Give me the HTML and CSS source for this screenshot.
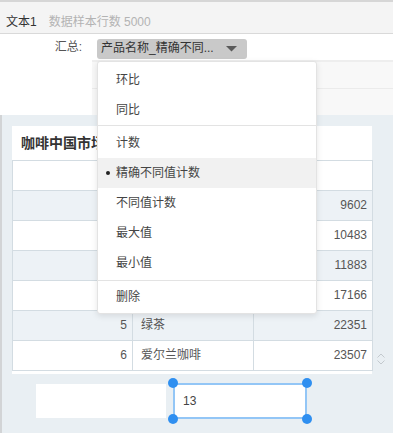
FILE: index.html
```html
<!DOCTYPE html>
<html lang="zh">
<head>
<meta charset="utf-8">
<title>文本1</title>
<link rel="stylesheet" href="styles.css">
</head>
<body>
<div class="page">
  <header class="topbar">
    <span class="title">文本1</span>
    <span class="meta">数据样本行数 5000</span>
  </header>

  <section class="settings">
    <div class="field">
      <span class="field-label">汇总:</span>
      <div class="select">
        <span class="select-text">产品名称_精确不同...</span>
        <svg class="caret" width="11" height="6" viewBox="0 0 11 6"><path d="M0 0H11L5.5 5.5Z" fill="#5a5a5a"/></svg>
      </div>
    </div>
    <div class="sub-rows">
      <div class="sub-row"></div>
      <div class="sub-row"></div>
    </div>
  </section>

  <main class="canvas">
    <div class="card-row">
      <div class="card">
        <div class="card-title"><span class="card-title-text">咖啡中国市场</span></div>
        <table class="grid">
          <colgroup><col class="c1"><col class="c2"><col class="c3"></colgroup>
          <tr class="head"><td></td><td></td><td></td></tr>
          <tr class="odd"><td class="num"></td><td></td><td class="num">9602</td></tr>
          <tr><td class="num"></td><td></td><td class="num">10483</td></tr>
          <tr class="odd"><td class="num"></td><td></td><td class="num">11883</td></tr>
          <tr><td class="num"></td><td></td><td class="num">17166</td></tr>
          <tr class="odd"><td class="num">5</td><td>绿茶</td><td class="num">22351</td></tr>
          <tr><td class="num">6</td><td>爱尔兰咖啡</td><td class="num">23507</td></tr>
        </table>
      </div>
      <svg class="scroller" width="10" height="14" viewBox="0 0 10 14"><path d="M1.5 5.5L5 2L8.5 5.5M1.5 8.5L5 12L8.5 8.5" fill="none" stroke="#c3c9ce" stroke-width="1"/></svg>
    </div>
    <div class="boxes">
      <div class="box"></div>
      <div class="box selected">13
        <span class="handle tl"></span><span class="handle tr"></span>
        <span class="handle bl"></span><span class="handle br"></span>
      </div>
    </div>
  </main>

  <ul class="menu">
    <li class="item"><span class="mark"></span>环比</li>
    <li class="item"><span class="mark"></span>同比</li>
    <li class="sep first"></li>
    <li class="item"><span class="mark"></span>计数</li>
    <li class="item active"><span class="mark"><i class="dot"></i></span>精确不同值计数</li>
    <li class="item"><span class="mark"></span>不同值计数</li>
    <li class="item"><span class="mark"></span>最大值</li>
    <li class="item"><span class="mark"></span>最小值</li>
    <li class="sep last"></li>
    <li class="item"><span class="mark"></span>删除</li>
  </ul>
</div>
</body>
</html>
```

FILE: styles.css
```css
* { box-sizing: border-box; }
html, body { margin: 0; padding: 0; }
body {
  width: 393px;
  height: 433px;
  overflow: hidden;
  background: #ffffff;
  font-family: "Liberation Sans", "Noto Sans CJK SC", sans-serif;
  font-size: 12px;
  color: #333;
}
.page {
  position: relative;
  width: 393px;
  height: 433px;
  display: flex;
  flex-direction: column;
}

/* top bar */
.topbar {
  height: 34px;
  flex: none;
  background: #f4f4f4;
  border-top: 2px solid #d6d6d6;
  border-bottom: 1px solid #d9d9d9;
  padding: 12px 0 0 6px;
  line-height: 17px;
  display: flex;
  gap: 12px;
}
.title { color: #333; }
.meta { color: #b3b3b3; }

/* settings */
.settings { flex: none; background: #fff; }
.field {
  height: 26px;
  display: flex;
  align-items: center;
}
.field-label {
  width: 82px;
  text-align: right;
  color: #555;
  line-height: 17px;
}
.select {
  margin-left: 15px;
  width: 150px;
  height: 20px;
  margin-top: 3px;
  background: #c9c9c9;
  border-radius: 3px;
  display: flex;
  align-items: center;
  padding-left: 4px;
}
.select-text { color: #333; line-height: 17px; flex: 1; white-space: nowrap; }
.caret { margin-right: 10px; margin-top: 1px; }
.sub-rows {
  margin-left: 92px;
  border-top: 2px solid #eeeeee;
}
.sub-row { height: 26px; background: #f8f8f8; }
.sub-row + .sub-row { border-top: 1px solid #ebebeb; height: 27px; }

/* canvas */
.canvas {
  flex: 1;
  background: #e9eff3;
  border-left: 2px solid #d2d4d6;
}
.card-row {
  display: flex;
  padding: 11px 0 0 10px;
}
.card {
  width: 360px;
  background: #fff;
  padding-bottom: 3px;
}
.card-title {
  height: 34px;
  line-height: 34px;
  padding-left: 9px;
  font-size: 14px;
  font-weight: bold;
  color: #333;
  white-space: nowrap;
  overflow: hidden;
}
.grid {
  width: 360px;
  border-collapse: collapse;
  table-layout: fixed;
}
.c1 { width: 120px; }
.c2 { width: 121px; }
.c3 { width: 119px; }
.grid td {
  height: 30px;
  border: 1px solid #d3dce2;
  padding: 0 5px 0 8px;
  color: #555;
  white-space: nowrap;
  overflow: hidden;
  line-height: 17px;
}
.grid td.num { text-align: right; padding-right: 5px; }
.grid tr.odd td { background: #edf2f6; }
.scroller { align-self: flex-end; margin: 0 0 8px 4px; }

.boxes {
  display: flex;
  align-items: flex-start;
  padding-left: 34px;
  margin-top: 9px;
}
.box {
  width: 130px;
  height: 34px;
  margin-top: 1px;
  background: #fff;
}
.box.selected {
  position: relative;
  width: 134px;
  height: 36px;
  margin: 0 0 0 7px;
  border: 2px solid #93c6f6;
  padding-left: 8px;
  line-height: 32px;
  font-size: 12px;
  color: #444;
}
.handle {
  position: absolute;
  width: 10px;
  height: 10px;
  border-radius: 50%;
  background: #2f8ff0;
}
.handle.tl { left: -7px; top: -7px; }
.handle.tr { right: -7px; top: -7px; }
.handle.bl { left: -7px; bottom: -7px; }
.handle.br { right: -7px; bottom: -7px; }

/* dropdown menu */
.menu {
  position: absolute;
  left: 97px;
  top: 61px;
  width: 220px;
  margin: 0;
  padding: 3px 0 1px;
  list-style: none;
  background: #fff;
  border: 1px solid #e3e3e3;
  border-radius: 3px;
  box-shadow: 0 2px 6px rgba(0, 0, 0, 0.10);
}
.item {
  height: 30px;
  display: flex;
  align-items: center;
  color: #444;
  line-height: 17px;
}
.item.active { background: #f1f1f1; }
.mark {
  width: 18px;
  flex: none;
  display: flex;
  padding-left: 8px;
}
.dot {
  width: 4px;
  height: 4px;
  border-radius: 50%;
  background: #222;
}
.sep { height: 1px; background: #e3e3e3; }
.sep.first { margin: 0 0 2px; }
.sep.last { margin: 2px 0 1px; }
```
